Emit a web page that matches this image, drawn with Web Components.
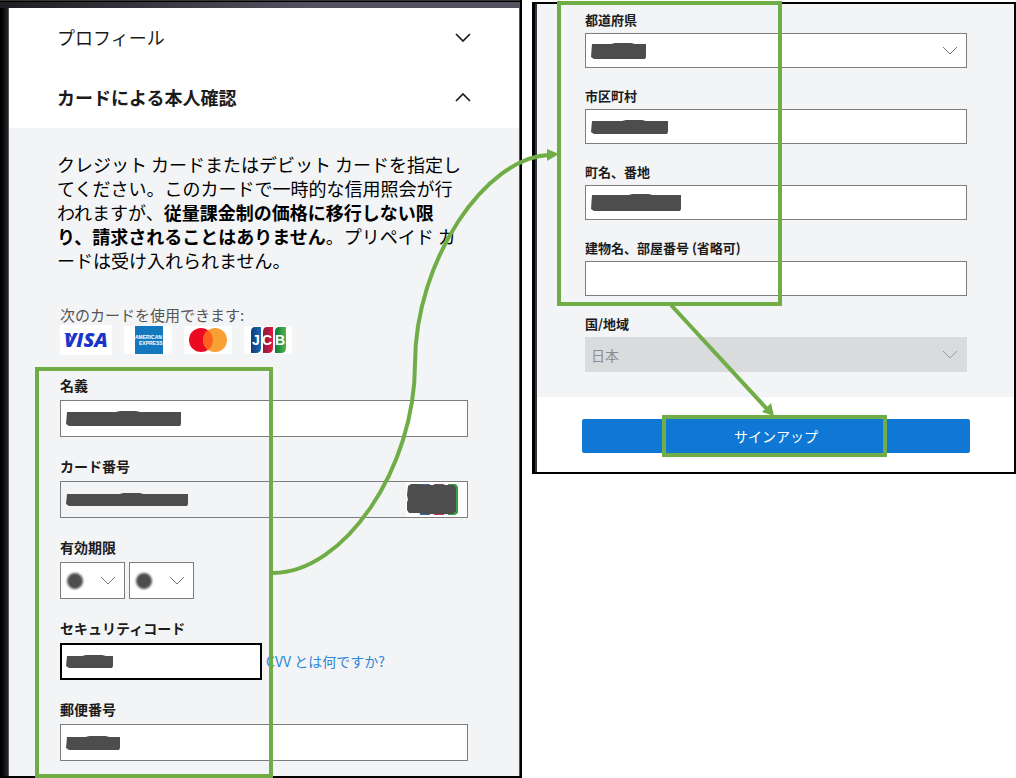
<!DOCTYPE html>
<html lang="ja">
<head>
<meta charset="utf-8">
<meta name="viewport" content="width=device-width, initial-scale=1">
<title>サインアップ</title>
<style>
  * {
    box-sizing: border-box;
  }

  body {
    margin: 0;
    background: #fff;
    color: #1b1b1b;
    font-family: "Noto Sans CJK JP", sans-serif;
    --ink: #1b1b1b;
    --line: #7d7d7d;
    --surface: #f3f4f6;
    --green: #70ad47;
    --link: #2e86d6;
  }
</style>
</head>
<body>
<signup-guide></signup-guide>

<script>
const CHEVRON = '<path d="M1 1l7 7 7-7" fill="none" stroke="currentColor"/>';

// Grey scribbles that hide the private values
class RedactMark extends HTMLElement {
  constructor() {
    super();
    this.attachShadow({ mode: 'open' });
  }

  connectedCallback() {
    const w = Number(this.getAttribute('width'));
    const h = Number(this.getAttribute('height'));
    const round = this.getAttribute('shape') === 'dot';
    const m = w / 2;
    const shape = round
      ? `<ellipse cx="${m}" cy="${h / 2}" rx="${m - 1}" ry="${h / 2 - 1}" transform="rotate(-15 ${m} ${h / 2})"/>`
      : `<path d="M1 1L${m - 8} 1L${m - 4} 0H${m + 12}L${m + 16} 1L${w - 1} 1V${h - 2}L${w - 2} ${h}L${m + 4} ${h}L3 ${h}L0 ${h - 2}Z"/>`;
    this.shadowRoot.innerHTML = `
      <style>
        :host { display: block; pointer-events: none; }
        svg {
          display: block;
          overflow: visible;
          fill: #4d4d4d;
          filter: blur(${round ? '1px' : '0.5px'});
        }
      </style>
      <svg width="${w}" height="${h}" aria-hidden="true">${shape}</svg>
    `;
  }
}

class AccordionHeader extends HTMLElement {
  constructor() {
    super();
    this.attachShadow({ mode: 'open' });
  }

  connectedCallback() {
    const open = this.hasAttribute('open');
    this.shadowRoot.innerHTML = `
      <style>
        :host { display: block; }
        button {
          display: flex;
          align-items: center;
          justify-content: space-between;
          width: 100%;
          height: 60px;
          padding: 0 48px 2px;
          border: 0;
          background: #fff;
          color: var(--ink);
          font: ${open ? 'bold' : 'normal'} 18px/24px "Noto Sans CJK JP", sans-serif;
          text-align: left;
        }
        svg { stroke-width: 1.7; ${open ? 'transform: scaleY(-1);' : ''} }
      </style>
      <button type="button" aria-expanded="${open}">
        <slot></slot>
        <svg width="16" height="9" aria-hidden="true">${CHEVRON}</svg>
      </button>
    `;
  }
}

// Labelled text box or drop-down. Anything slotted in lies over the control.
class FormField extends HTMLElement {
  constructor() {
    super();
    this.attachShadow({ mode: 'open' });
  }

  connectedCallback() {
    const label = this.getAttribute('label');
    const type = this.getAttribute('type');
    const disabled = this.hasAttribute('disabled') ? 'disabled' : '';
    const value = this.getAttribute('value') || '';
    const name = label
      ? `<label for="control">${label}</label>`
      : '';
    const aria = this.getAttribute('hint') ? `aria-label="${this.getAttribute('hint')}"` : '';
    const control = type === 'select'
      ? `<select id="control" ${aria} ${disabled}><option>${value}</option></select>
         <svg class="arrow" width="16" height="9" aria-hidden="true">${CHEVRON}</svg>`
      : `<input id="control" type="text" ${aria}>`;

    this.shadowRoot.innerHTML = `
      <style>
        * { box-sizing: border-box; }
        :host { display: block; min-width: 0; }
        label {
          display: block;
          margin-bottom: var(--label-gap, 5px);
          font-size: var(--label-size, 14px);
          font-weight: bold;
          line-height: 20px;
        }
        .box {
          display: grid;
          align-items: center;
        }
        .box > *, ::slotted(*) { grid-area: 1 / 1; }
        input, select {
          appearance: none;
          width: 100%;
          height: var(--box-height, 37px);
          margin: 0;
          padding: 0 5px;
          border: 1px solid var(--line);
          border-radius: 0;
          outline: 0;
          background: #fff;
          color: var(--ink);
          font: 14px/20px "Noto Sans CJK JP", sans-serif;
        }
        :host([focused]) input { border: 2px solid #000; }
        :host([filled]) input { background: transparent; }
        select:disabled {
          border-color: #dadbdd;
          background: #dadbdd;
          color: #8c8c8c;
          opacity: 1;
        }
        .arrow {
          justify-self: end;
          margin-right: 9px;
          color: #777;
          pointer-events: none;
        }
        :host([disabled]) .arrow { color: #999; }
        ::slotted(redact-mark) { margin-left: 6px; }
        ::slotted(card-preview) { justify-self: end; }
      </style>
      ${name}
      <div class="box">${control}<slot></slot></div>
    `;
  }
}

// Covered brand logo at the end of the card number box
class CardPreview extends HTMLElement {
  constructor() {
    super();
    this.attachShadow({ mode: 'open' }).innerHTML = `
      <style>
        :host { display: block; margin-right: 1px; pointer-events: none; }
        svg { display: block; }
      </style>
      <svg width="61" height="35" aria-hidden="true">
        <path d="M0 0H61V35H0Z" fill="#fff"/>
        <path d="M14 2H24V33H14Z" fill="#3b67a8"/>
        <path d="M28 2H38V33H28Z" fill="#c33551"/>
        <path d="M42 2H50L52 5V31L49 33H42Z" fill="#35a044"/>
        <path d="M2 4L5 2H14L16 3H28L30 2L40 3H48L50 6V29L47 32H18L12 31H3L1 28V20L2 18L1 13Z" fill="#4d4d4d"/>
      </svg>
    `;
  }
}

class CardBrands extends HTMLElement {
  constructor() {
    super();
    this.attachShadow({ mode: 'open' }).innerHTML = `
      <style>
        :host { display: block; }
        p { margin: 0; color: #555; font-size: 15px; line-height: 20px; }
        .logos { display: flex; align-items: center; gap: 12px; height: 30px; }
        svg { display: block; flex: none; background: #fff; }
      </style>
      <p>次のカードを使用できます:</p>
      <div class="logos">
        <svg width="52" height="30" role="img" aria-label="VISA">
          <path d="M3 8H10L13 15Q9 9 3 8Z" fill="#1a36c8"/>
          <text x="4" y="22" fill="#1a36c8" font-family="Open Sans" font-size="20" font-weight="800" font-style="italic">VISA</text>
        </svg>
        <svg width="48" height="28" role="img" aria-label="American Express">
          <path d="M11 0H39V28H11Z" fill="#1478be"/>
          <g fill="#fff" font-family="Liberation Sans" font-size="5" font-weight="bold">
            <text x="11" y="13">AMERICAN</text>
            <text x="15" y="19">EXPRESS</text>
          </g>
        </svg>
        <svg width="48" height="28" role="img" aria-label="Mastercard">
          <circle cx="17" cy="14" r="12" fill="#eb0a22"/>
          <circle cx="31" cy="14" r="12" fill="#f8a034"/>
          <path d="M24 4.3a12 12 0 0 1 0 19.4a12 12 0 0 1 0-19.4Z" fill="#ff601c"/>
        </svg>
        <svg width="48" height="28" role="img" aria-label="JCB">
          <defs>
            <linearGradient id="j"><stop stop-color="#123c7c"/><stop offset="1" stop-color="#1b69ae"/></linearGradient>
            <linearGradient id="c"><stop stop-color="#871d3e"/><stop offset="1" stop-color="#e31641"/></linearGradient>
            <linearGradient id="b"><stop stop-color="#087b40"/><stop offset="1" stop-color="#56b448"/></linearGradient>
          </defs>
          <path d="M11 1H17V22Q17 27 12 27H7V6Q7 1 11 1Z" fill="url(#j)"/>
          <path d="M23 1H29V22Q29 27 24 27H19V6Q19 1 23 1Z" fill="url(#c)"/>
          <path d="M35 1H42V22Q42 27 37 27H31V6Q31 1 35 1Z" fill="url(#b)"/>
          <g fill="#fff" font-family="Liberation Sans" font-size="14" font-weight="bold">
            <text x="8" y="19">J</text>
            <text x="18" y="19">C</text>
            <text x="31" y="19">B</text>
          </g>
        </svg>
      </div>
    `;
  }
}

class CardPanel extends HTMLElement {
  constructor() {
    super();
    this.attachShadow({ mode: 'open' });
  }

  connectedCallback() {
    this.shadowRoot.innerHTML = `
      <style>
        * { box-sizing: border-box; }
        :host {
          display: block;
          padding: 8px 1px 0 9px;
          border-right: 2px solid #000;
          border-bottom: 2px solid #000;
          background:
            linear-gradient(#333a36, #333a36) top / 100% 1px no-repeat,
            linear-gradient(#000, #000) 0 1px / 100% 1px no-repeat,
            linear-gradient(90deg, #1d1d22, #555260 60%) 0 2px / 100% 6px no-repeat,
            linear-gradient(90deg, #000 2px, #101012 4px, #25252b 8px, #8b8b90 9px, #555260 9px);
        }
        .content {
          padding: 24px 51px 15px;
          background: var(--surface);
        }
        .note {
          margin: 0 0 33px -3px;
          color: #000;
          font-size: 18px;
          line-height: 24px;
        }
        form {
          display: grid;
          gap: 19px;
          margin-top: 20px;
        }
        .dates { display: grid; gap: 5px; }
        .title { font-size: 14px; font-weight: bold; line-height: 20px; }
        .pair { display: flex; gap: 4px; }
        .pair form-field { width: 65px; }
        .security {
          display: grid;
          grid-template-columns: 1fr 1fr;
          gap: 4px;
          align-items: end;
        }
        a {
          color: var(--link);
          font-size: 14px;
          line-height: 37px;
          text-decoration: none;
          white-space: nowrap;
        }
      </style>
      <accordion-header>プロフィール</accordion-header>
      <accordion-header open>カードによる本人確認</accordion-header>
      <div class="content">
        <p class="note">クレジット カードまたはデビット カードを指定してください。このカードで一時的な信用照会が行われますが、<b>従量課金制の価格に移行しない限り、請求されることはありません</b>。プリペイド カードは受け入れられません。</p>
        <card-brands></card-brands>
        <form>
          <form-field label="名義"><redact-mark width="116" height="15"></redact-mark></form-field>
          <form-field label="カード番号" filled>
            <redact-mark width="123" height="13"></redact-mark>
            <card-preview></card-preview>
          </form-field>
          <div class="dates" role="group" aria-labelledby="expiry">
            <span class="title" id="expiry">有効期限</span>
            <div class="pair">
              <form-field type="select" hint="月"><redact-mark shape="dot" width="18" height="18"></redact-mark></form-field>
              <form-field type="select" hint="年"><redact-mark shape="dot" width="18" height="18"></redact-mark></form-field>
            </div>
          </div>
          <div class="security">
            <form-field label="セキュリティコード" focused><redact-mark width="48" height="13"></redact-mark></form-field>
            <a href="#cvv">CVV とは何ですか?</a>
          </div>
          <form-field label="郵便番号"><redact-mark width="55" height="14"></redact-mark></form-field>
        </form>
      </div>
    `;
  }
}

class AddressPanel extends HTMLElement {
  constructor() {
    super();
    this.attachShadow({ mode: 'open' });
  }

  connectedCallback() {
    this.shadowRoot.innerHTML = `
      <style>
        * { box-sizing: border-box; }
        :host {
          display: block;
          margin-top: 2px;
          padding-left: 2px;
          border: 2px solid #000;
          border-left-width: 3px;
          background: linear-gradient(90deg, #34343c 2px, #fff 2px);
        }
        form {
          display: grid;
          gap: 18px;
          padding: 6px 47px 25px 48px;
          background: var(--surface);
          --label-size: 13px;
          --label-gap: 3px;
          --box-height: 35px;
        }
        footer { padding: 22px 44px 19px 45px; }
        button {
          display: block;
          width: 100%;
          height: 34px;
          border: 0;
          border-radius: 2px;
          background: #0f78d4;
          color: #fff;
          font: 14px/20px "Noto Sans CJK JP", sans-serif;
        }
      </style>
      <form id="address">
        <form-field label="都道府県" type="select"><redact-mark width="56" height="16"></redact-mark></form-field>
        <form-field label="市区町村"><redact-mark width="78" height="14"></redact-mark></form-field>
        <form-field label="町名、番地"><redact-mark width="91" height="17"></redact-mark></form-field>
        <form-field label="建物名、部屋番号 (省略可)"></form-field>
        <form-field label="国/地域" type="select" value="日本" disabled></form-field>
      </form>
      <footer><button type="submit" form="address">サインアップ</button></footer>
    `;
  }
}

// Green frames and arrows drawn over both panels
class GuideOverlay extends HTMLElement {
  constructor() {
    super();
    this.attachShadow({ mode: 'open' }).innerHTML = `
      <style>
        :host {
          display: block;
          position: absolute;
          inset: 0;
          pointer-events: none;
        }
        svg { display: block; width: 100%; height: 100%; }
      </style>
      <svg viewBox="0 0 1016 778" preserveAspectRatio="none" aria-hidden="true">
        <g fill="none" stroke="var(--green)" stroke-width="4">
          <rect x="37" y="369" width="234" height="407"/>
          <rect x="559" y="3" width="221" height="301"/>
          <rect x="664" y="417" width="221" height="38"/>
          <path d="M273 573C344 573 415 468 415 364S486 157 549 155"/>
          <path d="M671 305L767 409"/>
        </g>
        <path d="M547 149L559 154L547 161Z" fill="var(--green)"/>
        <path d="M762 412L771 403L774 416Z" fill="var(--green)"/>
      </svg>
    `;
  }
}

class SignupGuide extends HTMLElement {
  constructor() {
    super();
    this.attachShadow({ mode: 'open' }).innerHTML = `
      <style>
        :host {
          display: grid;
          grid-template-columns: 522fr 484fr;
          gap: 10px;
          align-items: start;
          position: relative;
        }
      </style>
      <card-panel></card-panel>
      <address-panel></address-panel>
      <guide-overlay></guide-overlay>
    `;
  }
}

customElements.define('redact-mark', RedactMark);
customElements.define('accordion-header', AccordionHeader);
customElements.define('form-field', FormField);
customElements.define('card-preview', CardPreview);
customElements.define('card-brands', CardBrands);
customElements.define('card-panel', CardPanel);
customElements.define('address-panel', AddressPanel);
customElements.define('guide-overlay', GuideOverlay);
customElements.define('signup-guide', SignupGuide);
</script>
</body>
</html>
